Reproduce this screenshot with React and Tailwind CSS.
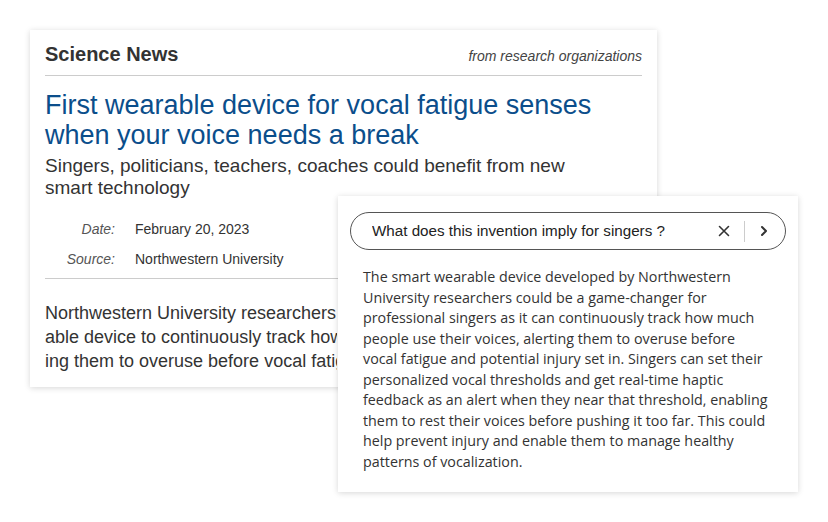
import { useState } from "react";

const answerLines = [
  "The smart wearable device developed by Northwestern",
  "University researchers could be a game-changer for",
  "professional singers as it can continuously track how much",
  "people use their voices, alerting them to overuse before",
  "vocal fatigue and potential injury set in. Singers can set their",
  "personalized vocal thresholds and get real-time haptic",
  "feedback as an alert when they near that threshold, enabling",
  "them to rest their voices before pushing it too far. This could",
  "help prevent injury and enable them to manage healthy",
  "patterns of vocalization.",
];

// the rest of the paragraph sits under the answer panel
const bodyLines = [
  "Northwestern University researchers have developed",
  "able device to continuously track how much people",
  "ing them to overuse before vocal fatigue and potential",
];

const App = () => {
  const [question, setQuestion] = useState("What does this invention imply for singers ?");

  return (
    <div className="relative w-[828px] h-[522px] bg-white overflow-hidden font-['Liberation_Sans',Arial,sans-serif]">
      <div className="pt-[30px] pl-[30px]">
        <div className="w-[627px] bg-white shadow-[0_1px_6px_rgba(0,0,0,0.16)] px-[15px] pt-[12px] pb-[14px] overflow-hidden">
          <div className="flex justify-between items-baseline border-b border-[#cccccc] pb-[8px]">
            <span className="text-[20px] leading-[24px] font-bold text-[#333333]">Science News</span>
            <span className="text-[14px] italic text-[#444444]">from research organizations</span>
          </div>

          <h1 className="mt-[14px] text-[27px] leading-[30px] text-[#0b4e8b]">
            First wearable device for vocal fatigue senses
            <br />
            when your voice needs a break
          </h1>
          <h2 className="mt-[5px] text-[19px] leading-[22px] text-[#333333]">
            Singers, politicians, teachers, coaches could benefit from new
            <br />
            smart technology
          </h2>

          <div className="mt-[15px] text-[14px] leading-[30px] text-[#333333]">
            <div className="flex">
              <span className="w-[70px] text-right italic text-[#555555]">Date:</span>
              <span className="ml-[20px]">February 20, 2023</span>
            </div>
            <div className="flex">
              <span className="w-[70px] text-right italic text-[#555555]">Source:</span>
              <span className="ml-[20px]">Northwestern University</span>
            </div>
          </div>

          <div className="mt-[4px] border-t border-[#cccccc]" />

          <div className="mt-[22px] w-[292px] overflow-hidden text-[18px] leading-[24px] text-[#333333] whitespace-nowrap">
            {bodyLines.map((line, i) => (
              <div key={i}>{line}</div>
            ))}
          </div>
        </div>
      </div>

      <div className="absolute left-[338px] top-[196px] w-[460px] h-[296px] bg-white shadow-[0_1px_6px_rgba(0,0,0,0.16)] px-[12px] pt-[16px]">
        <div className="flex items-center h-[38px] rounded-full border-[1.5px] border-[#555555] pl-[21px] pr-[12px]">
          <input
            value={question}
            onChange={(e) => setQuestion(e.target.value)}
            className="flex-1 bg-transparent outline-none text-[15.2px] text-[#222222] font-['Liberation_Sans',Arial,sans-serif]"
          />
          <button className="w-[20px] h-[20px] flex items-center justify-center text-[#333333]">
            <svg width="12" height="12" viewBox="0 0 12 12" fill="none" stroke="currentColor" strokeWidth="1.6" strokeLinecap="round">
              <path d="M1.5 1.5 L10.5 10.5 M10.5 1.5 L1.5 10.5" />
            </svg>
          </button>
          <div className="w-px h-[21px] bg-[#cccccc] ml-[10px] mr-[10px]" />
          <button className="w-[18px] h-[20px] flex items-center justify-center text-[#333333]">
            <svg width="8" height="12" viewBox="0 0 8 12" fill="none" stroke="currentColor" strokeWidth="2" strokeLinecap="round" strokeLinejoin="round">
              <path d="M2 2 L6 6 L2 10" />
            </svg>
          </button>
        </div>

        <div className="mt-[17px] pl-[13px] text-[14.3px] leading-[20.5px] text-[#333333] whitespace-nowrap font-['Open_Sans',sans-serif]">
          {answerLines.map((line, i) => (
            <div key={i}>{line}</div>
          ))}
        </div>
      </div>
    </div>
  );
};

export default App;
